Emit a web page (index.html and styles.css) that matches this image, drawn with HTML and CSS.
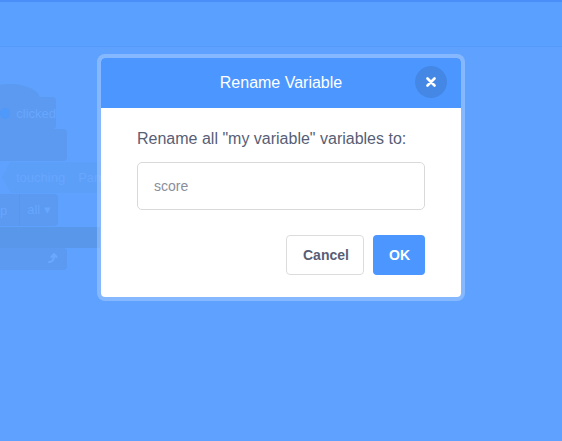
FILE: index.html
```html
<!DOCTYPE html>
<html lang="en">
<head>
  <meta charset="UTF-8" />
  <title>Rename Variable</title>
  <link rel="stylesheet" href="styles.css">
</head>
<body>
  <div class="stage">
    <div class="menu"></div>
    <div class="workspace">
      <div class="block hat"><span class="dot"></span><span class="block-text">clicked</span></div>
      <div class="block stack-a"></div>
      <div class="reporter"><span class="block-text">touching</span><span class="block-text slot">Parrot</span></div>
      <div class="block stack-b"><span class="block-text">p</span><span class="block-text drop">all &#9662;</span></div>
      <div class="block band"></div>
      <div class="block stack-c">
        <svg class="turn" width="12" height="12" viewBox="0 0 12 12"><path d="M2 10 C4 10 7 9 7 4 M4.5 5 L7 2 L9.5 5" fill="none" stroke="#6aa8ff" stroke-width="2" stroke-linecap="round" stroke-linejoin="round"/></svg>
      </div>
    </div>

    <div class="overlay">
      <div class="modal">
        <div class="modal-header">
          <span class="modal-title">Rename Variable</span>
          <button class="close" aria-label="Close">
            <svg width="10" height="10" viewBox="0 0 10 10"><path d="M1.5 1.5 L8.5 8.5 M8.5 1.5 L1.5 8.5" stroke="white" stroke-width="2.6" stroke-linecap="round"/></svg>
          </button>
        </div>
        <div class="modal-body">
          <p class="label">Rename all "my variable" variables to:</p>
          <input class="name-input" type="text" placeholder="score" />
          <div class="buttons">
            <button class="btn cancel">Cancel</button>
            <button class="btn ok">OK</button>
          </div>
        </div>
      </div>
    </div>
  </div>
</body>
</html>
```

FILE: styles.css
```css
body {
  margin: 0;
  font-family: "Liberation Sans", Arial, sans-serif;
  background: #5ea1ff;
  overflow: hidden;
}
.stage {
  position: relative;
  width: 562px;
  height: 441px;
}
.menu {
  height: 44px;
  border-top: 2px solid #4a8ff8;
  border-bottom: 1px solid #569af9;
  background: #5aa0ff;
}

/* faded blocks behind the overlay */
.block {
  position: absolute;
  left: 0;
  background: #5b9af0;
  border-radius: 0 4px 4px 0;
}
.block-text {
  font-size: 13px;
  color: #68a6ff;
}
.hat {
  top: 97px;
  width: 56px;
  height: 32px;
  display: flex;
  align-items: center;
  gap: 6px;
}
.hat::before {
  content: "";
  position: absolute;
  left: -20px;
  top: -13px;
  width: 60px;
  height: 30px;
  border-radius: 50%;
  background: #5b9af0;
  z-index: -1;
}
.dot {
  width: 11px;
  height: 11px;
  border-radius: 50%;
  background: #4f99fb;
}
.stack-a {
  top: 129px;
  width: 67px;
  height: 32px;
}
.reporter {
  position: absolute;
  left: 10px;
  top: 162px;
  width: 100px;
  height: 31px;
  background: #5c9ff9;
  display: flex;
  align-items: center;
  gap: 13px;
  padding-left: 6px;
  box-sizing: border-box;
}
.reporter::before {
  content: "";
  position: absolute;
  left: -8px;
  top: 0;
  border-right: 8px solid #5c9ff9;
  border-top: 15.5px solid transparent;
  border-bottom: 15.5px solid transparent;
}
.slot {
  color: #68a6ff;
}
.stack-b {
  top: 194px;
  width: 58px;
  height: 32px;
  display: flex;
  align-items: center;
  gap: 12px;
}
.drop {
  padding-left: 7px;
  border-left: 1px solid #5896ea;
  line-height: 32px;
}
.band {
  top: 227px;
  width: 100px;
  height: 21px;
  border-radius: 0;
  background: #5997ea;
}
.stack-c {
  top: 248px;
  width: 67px;
  height: 22px;
}
.turn {
  position: absolute;
  right: 8px;
  top: 4px;
}

/* modal */
.overlay {
  position: absolute;
  inset: 0;
  display: flex;
  justify-content: center;
  align-items: flex-start;
  padding-top: 54px;
}
.modal {
  width: 360px;
  border: 4px solid rgba(255, 255, 255, 0.25);
  border-radius: 8px;
  background: white;
  background-clip: padding-box;
  overflow: hidden;
}
.modal-header {
  position: relative;
  height: 50px;
  background: #4c97ff;
  display: flex;
  align-items: center;
  justify-content: center;
}
.modal-title {
  color: white;
  font-size: 16px;
}
.close {
  position: absolute;
  right: 14px;
  top: 8px;
  width: 32px;
  height: 32px;
  border: none;
  border-radius: 50%;
  background: rgba(0, 0, 0, 0.1);
  display: flex;
  align-items: center;
  justify-content: center;
  padding: 0;
}
.modal-body {
  padding: 22px 36px 22px;
}
.label {
  margin: 0 0 14px;
  font-size: 16px;
  color: #575e75;
}
.name-input {
  display: block;
  width: 100%;
  height: 48px;
  box-sizing: border-box;
  border: 1px solid #d9d9d9;
  border-radius: 5px;
  padding: 0 16px;
  font-family: inherit;
  font-size: 14px;
  color: #575e75;
  outline: none;
}
.name-input::placeholder {
  color: #8a8e9c;
}
.buttons {
  display: flex;
  justify-content: flex-end;
  gap: 9px;
  margin-top: 25px;
}
.btn {
  height: 40px;
  border-radius: 4px;
  font-family: inherit;
  font-size: 14px;
  font-weight: bold;
  padding: 0 16px;
}
.cancel {
  background: white;
  color: #575e75;
  border: 1px solid #dcdcdc;
  width: 78px;
}
.ok {
  background: #4c97ff;
  color: white;
  border: none;
  width: 52px;
}
```
